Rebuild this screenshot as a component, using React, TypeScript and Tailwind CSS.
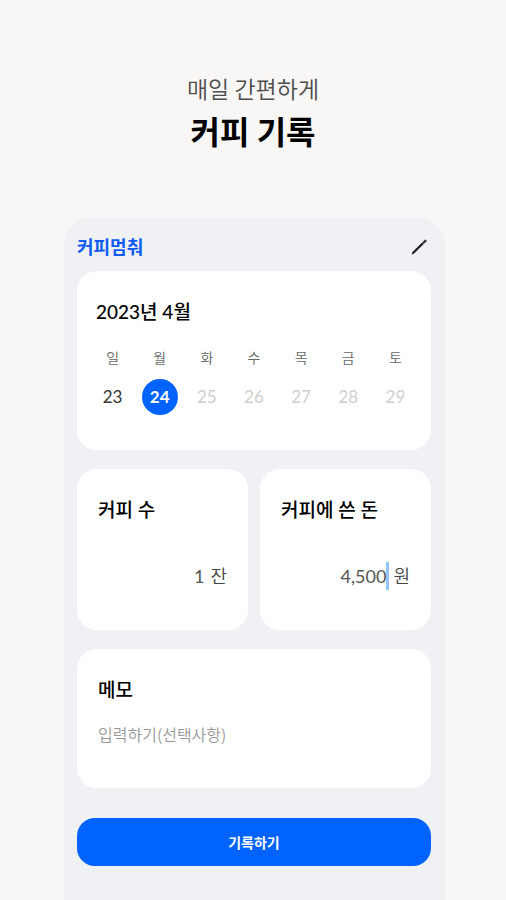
import React, { useState } from 'react';

const WEEK = [
  { label: '일', date: 23 },
  { label: '월', date: 24 },
  { label: '화', date: 25 },
  { label: '수', date: 26 },
  { label: '목', date: 27 },
  { label: '금', date: 28 },
  { label: '토', date: 29 },
];

const TODAY = 24;

function PencilIcon() {
  return (
    <svg width="16" height="16" viewBox="0 0 16 16" fill="none" aria-hidden="true">
      <path d="M1.8 14.2 12.2 4" stroke="#1a1c20" strokeWidth="2.2" />
      <path d="M0.6 15.4 1.1 13.5 2.5 14.9Z" fill="#1a1c20" />
      <path d="M13.1 3.1 14.4 1.8" stroke="#33353a" strokeWidth="2.4" strokeLinecap="round" />
    </svg>
  );
}

function dateClass(date: number, selected: number) {
  if (date === selected) return 'bg-[#0062ff] font-bold text-white';
  if (date > TODAY) return 'text-[#cfcfcf]';
  return 'text-[#333333]';
}

export default function App() {
  const [selected, setSelected] = useState(TODAY);
  const [cups, setCups] = useState('1');
  const [cost, setCost] = useState('4,500');
  const [memo, setMemo] = useState('');

  return (
    <main className="flex min-h-screen flex-col bg-[#f8f7f5] pt-[71px] font-['Lato','Noto_Sans_CJK_KR',sans-serif] text-black">
      <header className="text-center font-['Noto_Sans_CJK_KR',sans-serif]">
        <p className="text-[23px] leading-[34px] font-[350] text-[#4d4d4d]">매일 간편하게</p>
        <h1 className="text-[32px] leading-[50px] font-bold">커피 기록</h1>
      </header>

      <div className="mt-[62px] mr-[61px] ml-16 flex flex-1 flex-col rounded-t-[28px] bg-[#eff1f5] pt-[18px] pr-[14px] pl-[13px]">
        <div className="flex h-6 items-center justify-between pr-1">
          <span className="text-[18px] leading-6 font-bold text-[#0f5cf5]">커피멈춰</span>
          <button type="button" aria-label="수정">
            <PencilIcon />
          </button>
        </div>

        <section className="mt-3 rounded-[20px] bg-white px-3 pt-7 pb-[35px]">
          <h2 className="pl-[7px] text-[19px] leading-[26px] font-medium">2023년 4월</h2>
          <div className="mt-5 grid grid-cols-7 text-center">
            {WEEK.map((day) => (
              <div key={day.date} className="flex flex-col items-center gap-2">
                <span className="text-[14px] leading-[26px] font-[350] text-[#666666]">{day.label}</span>
                <button
                  type="button"
                  onClick={() => setSelected(day.date)}
                  className={`h-9 w-9 rounded-full text-[17px] leading-9 ${dateClass(day.date, selected)}`}
                >
                  {day.date}
                </button>
              </div>
            ))}
          </div>
        </section>

        <div className="mt-[19px] grid grid-cols-2 gap-3">
          <section className="rounded-[20px] bg-white px-[21px] pt-7 pb-10">
            <label htmlFor="cups" className="block text-[19px] leading-[26px] font-medium">
              커피 수
            </label>
            <div className="mt-[39px] flex items-center justify-end gap-[6px] text-[18px] leading-7 font-[350] text-[#444444]">
              <input
                id="cups"
                inputMode="numeric"
                value={cups}
                onChange={(e) => setCups(e.target.value)}
                className="w-12 bg-transparent text-right font-normal text-[#555555] outline-none"
              />
              <span>잔</span>
            </div>
          </section>

          <section className="rounded-[20px] bg-white px-[21px] pt-7 pb-10">
            <label htmlFor="cost" className="block text-[19px] leading-[26px] font-medium">
              커피에 쓴 돈
            </label>
            <div className="mt-[39px] flex items-center justify-end text-[18px] leading-7 font-[350] text-[#444444]">
              <input
                id="cost"
                inputMode="numeric"
                value={cost}
                onChange={(e) => setCost(e.target.value)}
                className="w-16 bg-transparent text-right font-normal text-[#555555] outline-none"
              />
              <span className="mr-1 h-7 w-[3px] bg-[#93c3fb]" />
              <span>원</span>
            </div>
          </section>
        </div>

        <section className="mt-[19px] rounded-[20px] bg-white px-[21px] pt-7 pb-[41px]">
          <label htmlFor="memo" className="block text-[19px] leading-[26px] font-medium">
            메모
          </label>
          <input
            id="memo"
            value={memo}
            onChange={(e) => setMemo(e.target.value)}
            placeholder="입력하기(선택사항)"
            className="mt-[18px] block h-[26px] w-full bg-transparent font-['Noto_Sans_CJK_KR',sans-serif] text-[16px] leading-[26px] font-[350] outline-none placeholder:text-[#999999]"
          />
        </section>

        <button
          type="button"
          className="mt-[30px] mb-[34px] h-12 w-full rounded-[18px] bg-[#0062ff] text-[14px] font-bold text-white"
        >
          기록하기
        </button>
      </div>
    </main>
  );
}
